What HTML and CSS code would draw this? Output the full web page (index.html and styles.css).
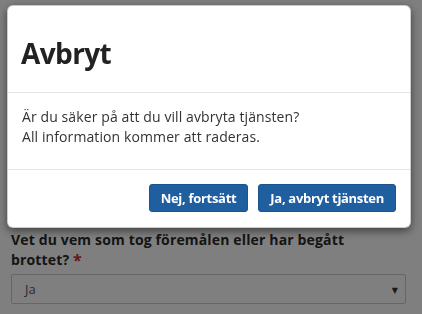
FILE: index.html
```html
<!DOCTYPE html>
<html lang="sv">
<head>
<meta charset="utf-8">
<title>Avbryt</title>
<link rel="stylesheet" href="styles.css">
</head>
<body>
<main class="page">
  <div class="field">
    <label class="field-label">Vet du vem som tog föremålen eller har begått brottet? <span class="req">*</span></label>
    <div class="select">
      <span class="select-value">Ja</span>
      <span class="select-arrow">▼</span>
    </div>
  </div>
</main>
<div class="backdrop"></div>
<div class="modal" role="dialog">
  <div class="modal-header">
    <h1 class="modal-title">Avbryt</h1>
  </div>
  <div class="modal-body">
    <p>Är du säker på att du vill avbryta tjänsten?<br>All information kommer att raderas.</p>
  </div>
  <div class="modal-footer">
    <button class="btn">Nej, fortsätt</button>
    <button class="btn">Ja, avbryt tjänsten</button>
  </div>
</div>
</body>
</html>
```

FILE: styles.css
```css
html, body {
  margin: 0;
  padding: 0;
  width: 422px;
  height: 314px;
  overflow: hidden;
  background: #fff;
  font-family: "Open Sans", "DejaVu Sans", sans-serif;
  color: #333;
}

.page {
  padding: 230px 16px 0 11px;
}

.field-label {
  display: block;
  font-weight: 700;
  font-size: 14px;
  line-height: 20px;
  letter-spacing: 0.15px;
  color: #2a2a2a;
  width: 360px;
}

.req {
  display: inline-block;
  color: #c9302c;
  font-size: 16px;
  line-height: 14px;
  height: 14px;
  vertical-align: -1px;
}

.select {
  margin-top: 4px;
  height: 28px;
  border: 1px solid #ccc;
  border-radius: 2px;
  display: flex;
  align-items: center;
  justify-content: space-between;
  padding: 0 7px 0 13px;
  font-size: 13px;
  color: #555;
}

.select-arrow {
  font-size: 8px;
  color: #333;
}

.backdrop {
  position: fixed;
  inset: 0;
  background: rgba(0, 0, 0, 0.5);
}

.modal {
  position: fixed;
  left: 7px;
  top: 5px;
  width: 402px;
  background: #fff;
  border: 1px solid rgba(0, 0, 0, 0.2);
  border-radius: 6px;
  box-shadow: 0 3px 9px rgba(0, 0, 0, 0.5);
}

.modal-header {
  padding: 0 14px;
  height: 86px;
  display: flex;
  align-items: flex-end;
  border-bottom: 1px solid #e5e5e5;
}

.modal-title {
  margin: 0 0 22px -1px;
  font-size: 28px;
  line-height: 34px;
  font-weight: 700;
  letter-spacing: -0.6px;
  color: #222;
}

.modal-body {
  padding: 14px 14px 22px;
  border-bottom: 1px solid #e5e5e5;
}

.modal-body p {
  margin: 0;
  font-size: 14px;
  line-height: 20px;
  letter-spacing: 0.1px;
  color: #333;
}

.modal-footer {
  display: flex;
  justify-content: flex-end;
  gap: 10px;
  padding: 14px 14px 15px;
}

.btn {
  font-family: inherit;
  font-weight: 700;
  font-size: 13px;
  line-height: 20px;
  letter-spacing: -0.3px;
  color: #fff;
  background: #1f5e9f;
  border: 1px solid #1a5590;
  border-radius: 3px;
  padding: 3px 11px;
  height: 28px;
}
```
